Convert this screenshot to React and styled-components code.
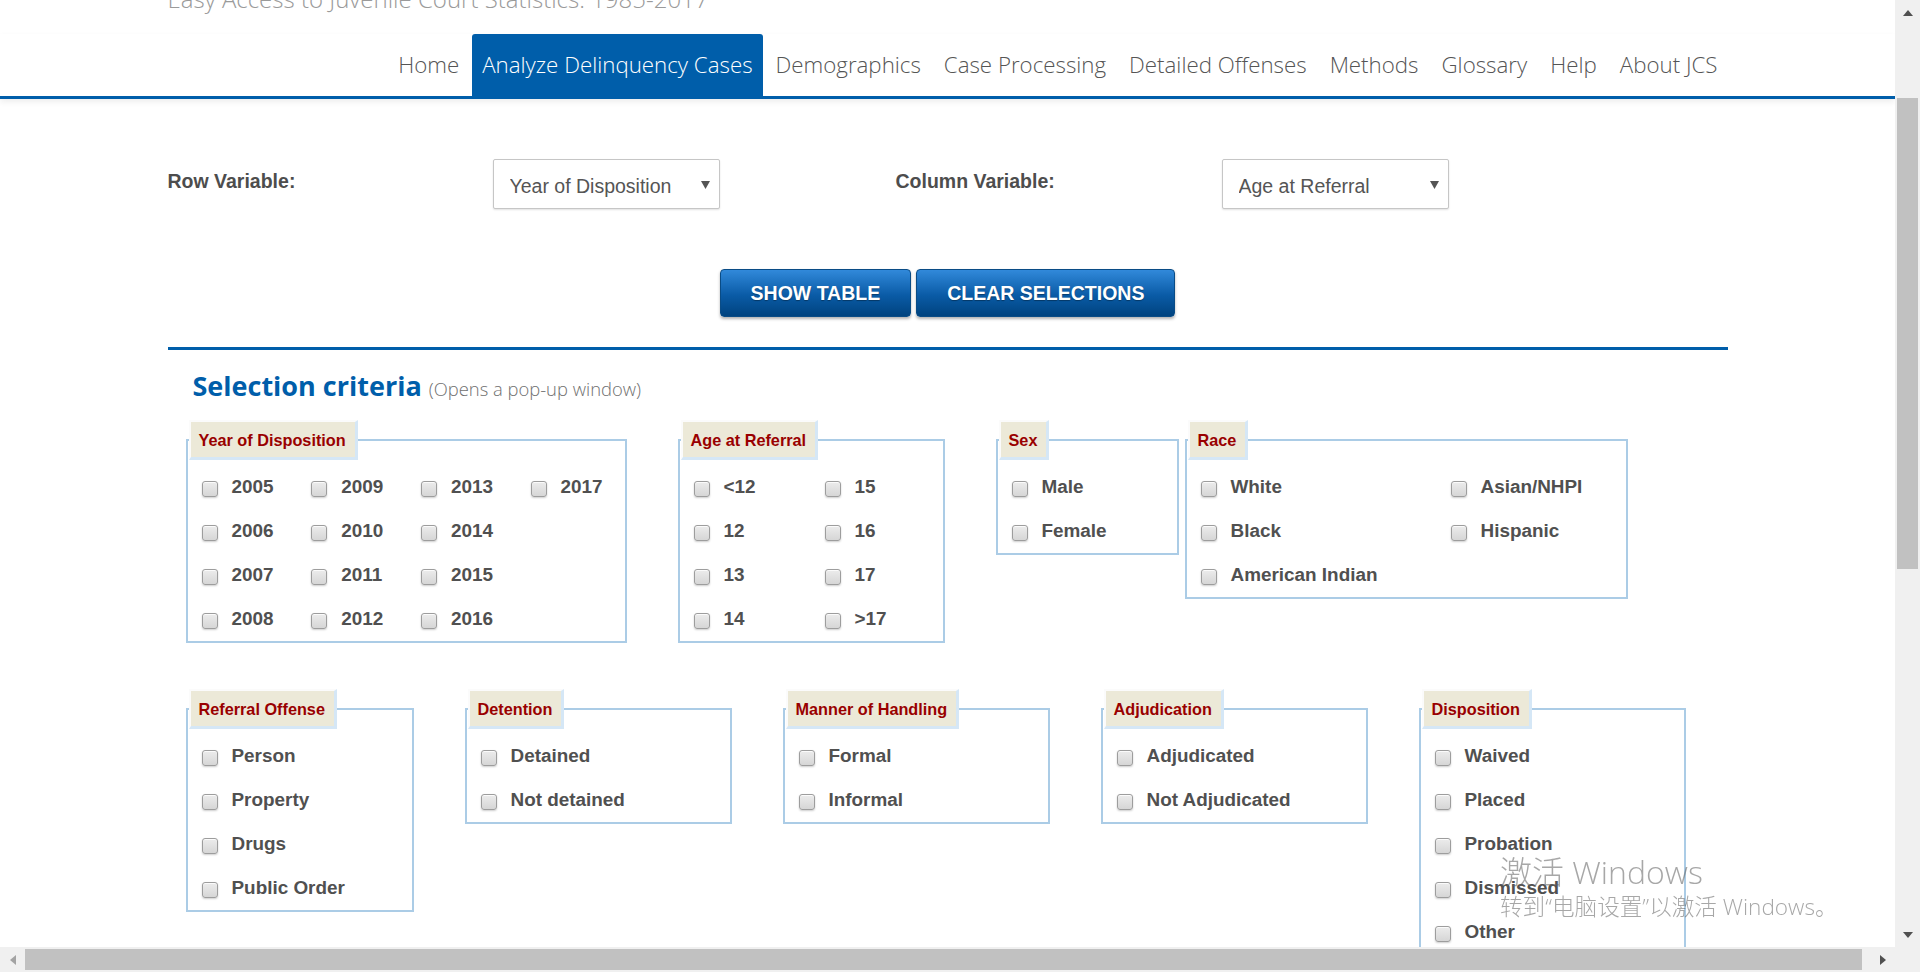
import React from "react";
import styled, { createGlobalStyle } from "styled-components";

const GlobalStyle = createGlobalStyle`
  html, body { margin: 0; padding: 0; height: 100%; overflow: hidden; background: #fff; }
  body { font-family: "Liberation Sans", Arial, sans-serif; }
  #root { height: 100%; }
  *, *::before, *::after { box-sizing: border-box; }
`;

const Viewport = styled.div`
  display: grid;
  grid-template-columns: 1fr 25px;
  grid-template-rows: 1fr 25px;
  width: 1920px;
  height: 972px;
`;

const Page = styled.main`
  overflow: hidden;
  min-width: 0;
  min-height: 0;
  background: #fff;
`;

const Container = styled.div`
  width: 1560px;
  margin: 0 auto;
`;

const SiteTitle = styled.div`
  font-family: "Open Sans", "Liberation Sans", sans-serif;
  font-weight: 300;
  font-size: 24px;
  line-height: 30px;
  height: 30px;
  color: #9a9a9a;
  margin-top: -16px;
  margin-bottom: 20px;
  white-space: nowrap;
`;

const NavBar = styled.nav`
  border-bottom: 3px solid #005eaa;
  box-shadow: 0 3px 6px rgba(0, 0, 0, 0.07);
`;

const NavList = styled.ul`
  list-style: none;
  margin: 0 auto;
  padding: 0;
  width: 1560px;
  height: 62px;
  display: flex;
  justify-content: flex-end;
  gap: 3px;
`;

const NavItem = styled.li`
  display: flex;
  align-items: center;
  padding: 0 10px 1px;
  font-family: "Open Sans", "Liberation Sans", sans-serif;
  font-weight: 300;
  font-size: 22.3px;
  white-space: nowrap;
  color: ${(p) => (p.$active ? "#ffffff" : "#555555")};
  background: ${(p) => (p.$active ? "#005eaa" : "transparent")};
  border-radius: 3px 3px 0 0;
  cursor: pointer;
`;

const FormArea = styled(Container)`
  padding-top: 60px;
`;

const VarRow = styled.div`
  display: grid;
  grid-template-columns: 325px 227px 176px 326px 227px;
  align-items: start;
`;

const VarLabel = styled.label`
  font-weight: bold;
  font-size: 19.5px;
  line-height: 22px;
  margin-top: 11px;
  color: #4d4d4d;
`;

const SelectWrap = styled.div`
  position: relative;
  width: 227px;
  height: 50px;
`;

const Select = styled.select`
  appearance: none;
  width: 100%;
  height: 100%;
  border: 1px solid #c6c6c6;
  border-radius: 2px;
  box-shadow: 0 1px 2px rgba(0, 0, 0, 0.12);
  background: #fff;
  padding: 4px 30px 0 16px;
  font-family: "Liberation Sans", Arial, sans-serif;
  font-size: 19.5px;
  color: #555;
`;

const Caret = styled.svg`
  position: absolute;
  right: 10px;
  top: 21px;
  pointer-events: none;
`;

const ButtonRow = styled.div`
  display: flex;
  justify-content: center;
  gap: 5px;
  margin-top: 60px;
`;

const ActionButton = styled.button`
  height: 48px;
  padding: 0 30px;
  border: 1px solid #0a4c86;
  border-radius: 4px;
  background: linear-gradient(#3189da, #0a5ba6 55%, #00437f);
  color: #fff;
  font-family: "Liberation Sans", Arial, sans-serif;
  font-weight: bold;
  font-size: 19.5px;
  text-shadow: 0 1px 1px rgba(0, 0, 0, 0.35);
  box-shadow: 0 2px 3px rgba(0, 0, 0, 0.3);
  cursor: pointer;
`;

const Divider = styled.hr`
  margin: 30px 0 0;
  border: 0;
  height: 3px;
  background: #005eaa;
`;

const Criteria = styled.section`
  padding-left: 18px;
`;

const CriteriaHeading = styled.div`
  display: flex;
  align-items: baseline;
  gap: 7px;
  margin: 19px 0 0 7px;
`;

const HeadingText = styled.h2`
  margin: 0;
  font-family: "Open Sans", "Liberation Sans", sans-serif;
  font-weight: 700;
  font-size: 27px;
  line-height: 34px;
  color: #005eaa;
`;

const HeadingNote = styled.span`
  font-family: "Open Sans", "Liberation Sans", sans-serif;
  font-weight: 300;
  font-size: 18.4px;
  color: #707070;
`;

const GroupRow = styled.div`
  display: flex;
  align-items: flex-start;
  gap: 51px;
  margin-top: ${(p) => p.$top}px;
`;

const Group = styled.fieldset`
  margin: 0;
  margin-left: ${(p) => p.$pull || 0}px;
  min-width: 0;
  width: ${(p) => p.$w}px;
  border: 2px solid #abcce6;
  padding: 5px 0 0 14px;
`;

const Legend = styled.legend`
  margin-left: -13px;
  padding: 9px 9px 8px 8px;
  background: #ece9d8;
  border-style: solid;
  border-width: 2px 3px 3px 2px;
  border-color: #fbfbfb #d5e7f6 #d5e7f6 #fbfbfb;
  font-family: "Liberation Sans", Arial, sans-serif;
  font-weight: bold;
  font-size: 16.25px;
  line-height: 18px;
  color: #990000;
  white-space: nowrap;
`;

const Options = styled.div`
  display: grid;
  grid-template-columns: ${(p) => p.$cols};
  grid-template-rows: repeat(${(p) => p.$rows}, 44px);
  grid-auto-flow: column;
`;

const Option = styled.label`
  display: flex;
  align-items: center;
  gap: 14px;
  font-family: "Liberation Sans", Arial, sans-serif;
  font-weight: bold;
  font-size: 18.9px;
  color: #505050;
  white-space: nowrap;
`;

const Check = styled.input.attrs({ type: "checkbox" })`
  appearance: none;
  flex: none;
  width: 16px;
  height: 16px;
  margin: 3px 0 0;
  border: 1px solid #9d9d9d;
  border-radius: 3px;
  background: linear-gradient(#ececec, #d6d6d6);
  box-shadow: inset 0 1px 0 rgba(255, 255, 255, 0.8), 0 1px 2px rgba(0, 0, 0, 0.2);
`;

const VScroll = styled.div`
  grid-row: 1;
  grid-column: 2;
  display: flex;
  flex-direction: column;
  background: #f0f0f0;
`;

const HScroll = styled.div`
  grid-row: 2;
  grid-column: 1;
  display: flex;
  background: #f0f0f0;
`;

const Corner = styled.div`
  grid-row: 2;
  grid-column: 2;
  background: #f0f0f0;
`;

const ArrowButton = styled.div`
  flex: none;
  width: 25px;
  height: 25px;
  display: flex;
  align-items: center;
  justify-content: center;
`;

const VTrack = styled.div`
  flex: 1;
  padding: 73px 2px 0;
`;

const VThumb = styled.div`
  height: 471px;
  background: #c1c1c1;
`;

const HTrack = styled.div`
  flex: 1;
  padding: 2px 0;
`;

const HThumb = styled.div`
  width: 1837px;
  height: 100%;
  background: #c1c1c1;
`;

const Watermark = styled.div`
  position: fixed;
  left: 1500px;
  top: 852px;
  color: rgba(95, 95, 95, 0.55);
  font-weight: 300;
  pointer-events: none;
`;

const WatermarkTitle = styled.div`
  font-family: "Open Sans", "Noto Sans CJK SC", sans-serif;
  font-size: 32px;
  line-height: 40px;
  white-space: nowrap;
`;

const WatermarkSub = styled.div`
  font-family: "Open Sans", "Noto Sans CJK SC", sans-serif;
  font-size: 22.6px;
  line-height: 30px;
  white-space: nowrap;
`;

const navItems = [
  "Home",
  "Analyze Delinquency Cases",
  "Demographics",
  "Case Processing",
  "Detailed Offenses",
  "Methods",
  "Glossary",
  "Help",
  "About JCS",
];

const row1 = [
  {
    title: "Year of Disposition",
    w: 441,
    cols: "109.7px 109.7px 109.7px 109.7px",
    rows: 4,
    items: ["2005", "2006", "2007", "2008", "2009", "2010", "2011", "2012", "2013", "2014", "2015", "2016", "2017"],
  },
  { title: "Age at Referral", w: 267, cols: "131px 1fr", rows: 4, items: ["<12", "12", "13", "14", "15", "16", "17", ">17"] },
  { title: "Sex", w: 183, cols: "1fr", rows: 2, items: ["Male", "Female"] },
  {
    title: "Race",
    w: 443,
    pull: -45,
    cols: "250px 1fr",
    rows: 3,
    items: ["White", "Black", "American Indian", "Asian/NHPI", "Hispanic"],
  },
];

const row2 = [
  { title: "Referral Offense", w: 228, cols: "1fr", rows: 4, items: ["Person", "Property", "Drugs", "Public Order"] },
  { title: "Detention", w: 267, cols: "1fr", rows: 2, items: ["Detained", "Not detained"] },
  { title: "Manner of Handling", w: 267, cols: "1fr", rows: 2, items: ["Formal", "Informal"] },
  { title: "Adjudication", w: 267, cols: "1fr", rows: 2, items: ["Adjudicated", "Not Adjudicated"] },
  { title: "Disposition", w: 267, cols: "1fr", rows: 5, items: ["Waived", "Placed", "Probation", "Dismissed", "Other"] },
];

function CriteriaGroup({ g }) {
  return (
    <Group $w={g.w} $pull={g.pull}>
      <Legend>{g.title}</Legend>
      <Options $cols={g.cols} $rows={g.rows}>
        {g.items.map((it) => (
          <Option key={it}>
            <Check />
            {it}
          </Option>
        ))}
      </Options>
    </Group>
  );
}

function Triangle({ dir, color }) {
  const pts = {
    up: "0,6 5,0 10,6",
    down: "0,0 10,0 5,6",
    left: "6,0 6,10 0,5",
    right: "0,0 0,10 6,5",
  }[dir];
  const vertical = dir === "up" || dir === "down";
  return (
    <svg width={vertical ? 10 : 6} height={vertical ? 6 : 10} viewBox={vertical ? "0 0 10 6" : "0 0 6 10"}>
      <polygon points={pts} fill={color} />
    </svg>
  );
}

function VarSelect({ value }) {
  return (
    <SelectWrap>
      <Select defaultValue={value}>
        <option>{value}</option>
      </Select>
      <Caret width="9" height="9" viewBox="0 0 9 9">
        <polygon points="0,1 9,1 4.5,9" fill="#555" />
      </Caret>
    </SelectWrap>
  );
}

export default function App() {
  return (
    <>
      <GlobalStyle />
      <Viewport>
        <Page>
          <Container>
            <SiteTitle>Easy Access to Juvenile Court Statistics: 1985-2017</SiteTitle>
          </Container>
          <NavBar>
            <NavList>
              {navItems.map((n) => (
                <NavItem key={n} $active={n === "Analyze Delinquency Cases"}>
                  {n}
                </NavItem>
              ))}
            </NavList>
          </NavBar>
          <FormArea>
            <VarRow>
              <VarLabel>Row Variable:</VarLabel>
              <VarSelect value="Year of Disposition" />
              <span />
              <VarLabel>Column Variable:</VarLabel>
              <VarSelect value="Age at Referral" />
            </VarRow>
            <ButtonRow>
              <ActionButton>SHOW TABLE</ActionButton>
              <ActionButton>CLEAR SELECTIONS</ActionButton>
            </ButtonRow>
            <Divider />
            <Criteria>
              <CriteriaHeading>
                <HeadingText>Selection criteria</HeadingText>
                <HeadingNote>(Opens a pop-up window)</HeadingNote>
              </CriteriaHeading>
              <GroupRow $top={17}>
                {row1.map((g) => (
                  <CriteriaGroup key={g.title} g={g} />
                ))}
              </GroupRow>
              <GroupRow $top={46}>
                {row2.map((g) => (
                  <CriteriaGroup key={g.title} g={g} />
                ))}
              </GroupRow>
            </Criteria>
          </FormArea>
        </Page>
        <VScroll>
          <ArrowButton>
            <Triangle dir="up" color="#505050" />
          </ArrowButton>
          <VTrack>
            <VThumb />
          </VTrack>
          <ArrowButton>
            <Triangle dir="down" color="#505050" />
          </ArrowButton>
        </VScroll>
        <HScroll>
          <ArrowButton>
            <Triangle dir="left" color="#a3a3a3" />
          </ArrowButton>
          <HTrack>
            <HThumb />
          </HTrack>
          <ArrowButton>
            <Triangle dir="right" color="#505050" />
          </ArrowButton>
        </HScroll>
        <Corner />
      </Viewport>
      <Watermark>
        <WatermarkTitle>激活 Windows</WatermarkTitle>
        <WatermarkSub>转到“电脑设置”以激活 Windows。</WatermarkSub>
      </Watermark>
    </>
  );
}
